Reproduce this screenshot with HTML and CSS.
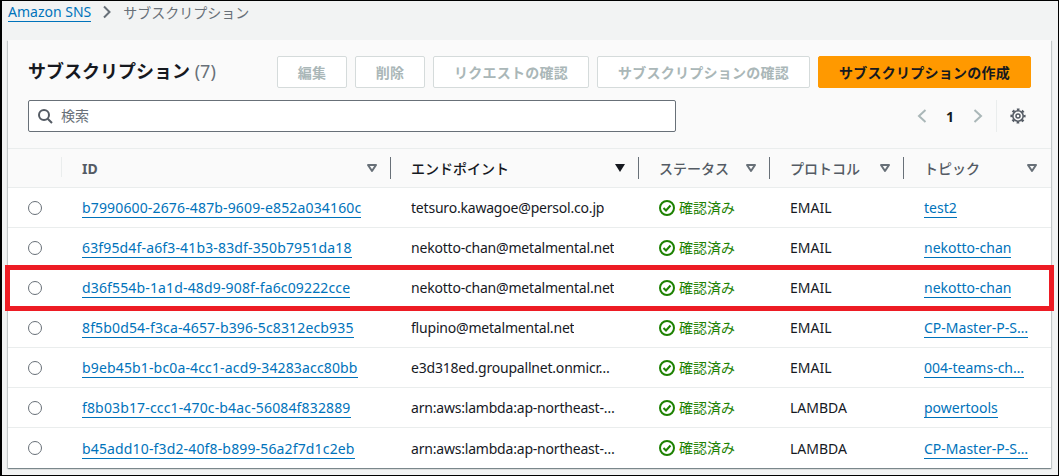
FILE: index.html
```html
<!DOCTYPE html>
<html lang="ja">
<head>
	<meta charset="UTF-8">
	<title>サブスクリプション</title>
	<link rel="stylesheet" href="styles.css">
</head>
<body>
	<div class="page">
		<div class="crumbs">
			<a class="link" href="#">Amazon SNS</a>
			<svg class="crumb-sep" width="12" height="14" viewBox="0 0 12 14"><path d="M3 1.5l5.5 5.5L3 12.5" fill="none" stroke="#687078" stroke-width="2"/></svg>
			<span class="crumb-now">サブスクリプション</span>
		</div>
		<div class="card">
			<div class="card-head">
				<div class="title-row">
					<h1 class="title">サブスクリプション <span class="count">(7)</span></h1>
					<div class="actions">
						<button class="btn w-edit">編集</button>
						<button class="btn w-edit">削除</button>
						<button class="btn w-req">リクエストの確認</button>
						<button class="btn w-sub">サブスクリプションの確認</button>
						<button class="btn w-sub primary">サブスクリプションの作成</button>
					</div>
				</div>
				<div class="tools-row">
					<div class="search">
						<svg width="16" height="16" viewBox="0 0 16 16"><circle cx="7" cy="7" r="5" fill="none" stroke="#545b64" stroke-width="2"/><path d="M10.7 10.7L15 15" stroke="#545b64" stroke-width="2" fill="none"/></svg>
						<span class="placeholder">検索</span>
					</div>
					<div class="pager">
						<svg width="12" height="14" viewBox="0 0 12 14"><path d="M9.5 1L3 7l6.5 6" fill="none" stroke="#aab7b8" stroke-width="2"/></svg>
						<span class="page-num">1</span>
						<svg width="12" height="14" viewBox="0 0 12 14"><path d="M2.5 1L9 7l-6.5 6" fill="none" stroke="#aab7b8" stroke-width="2"/></svg>
					</div>
					<div class="prefs">
						<svg width="16" height="16" viewBox="0 0 16 16" fill="none" stroke="#545b64"><circle cx="8" cy="8" r="5.2" stroke-width="1.6"/><circle cx="8" cy="8" r="6.6" stroke-width="2" stroke-dasharray="2.6 2.58" stroke-dashoffset="1.3"/><circle cx="8" cy="8" r="2" stroke-width="1.5"/></svg>
					</div>
				</div>
			</div>
			<div class="row head">
				<div class="cell th first"></div>
				<div class="cell th"><b class="th-id">ID</b><svg class="caret" width="12" height="10" viewBox="0 0 12 10"><path d="M2 2h8L6 8z" fill="none" stroke="#687078" stroke-width="2" stroke-linejoin="round"/></svg></div>
				<div class="cell th"><b class="sorted">エンドポイント</b><svg class="caret" width="12" height="10" viewBox="0 0 12 10"><path d="M1 1h10L6 9z" fill="#16191f"/></svg></div>
				<div class="cell th"><b>ステータス</b><svg class="caret" width="12" height="10" viewBox="0 0 12 10"><path d="M2 2h8L6 8z" fill="none" stroke="#687078" stroke-width="2" stroke-linejoin="round"/></svg></div>
				<div class="cell th"><b>プロトコル</b><svg class="caret" width="12" height="10" viewBox="0 0 12 10"><path d="M2 2h8L6 8z" fill="none" stroke="#687078" stroke-width="2" stroke-linejoin="round"/></svg></div>
				<div class="cell th"><b>トピック</b><svg class="caret" width="12" height="10" viewBox="0 0 12 10"><path d="M2 2h8L6 8z" fill="none" stroke="#687078" stroke-width="2" stroke-linejoin="round"/></svg></div>
			</div>
			<div class="row">
				<div class="cell radio-cell"><span class="radio"></span></div>
				<div class="cell"><a class="link id" href="#">b7990600-2676-487b-9609-e852a034160c</a></div>
				<div class="cell"><span class="clip ep">tetsuro.kawagoe@persol.co.jp</span></div>
				<div class="cell status"><svg class="ok" width="16" height="16" viewBox="0 0 16 16"><circle cx="8" cy="8" r="7" fill="none" stroke="#1d8102" stroke-width="2"/><path d="M4.5 8l2.5 2.5 4.5-5" fill="none" stroke="#1d8102" stroke-width="2"/></svg>確認済み</div>
				<div class="cell">EMAIL</div>
				<div class="cell"><a class="link" href="#">test2</a></div>
			</div>
			<div class="row">
				<div class="cell radio-cell"><span class="radio"></span></div>
				<div class="cell"><a class="link id" href="#">63f95d4f-a6f3-41b3-83df-350b7951da18</a></div>
				<div class="cell"><span class="clip ep">nekotto-chan@metalmental.net</span></div>
				<div class="cell status"><svg class="ok" width="16" height="16" viewBox="0 0 16 16"><circle cx="8" cy="8" r="7" fill="none" stroke="#1d8102" stroke-width="2"/><path d="M4.5 8l2.5 2.5 4.5-5" fill="none" stroke="#1d8102" stroke-width="2"/></svg>確認済み</div>
				<div class="cell">EMAIL</div>
				<div class="cell"><a class="link" href="#">nekotto-chan</a></div>
			</div>
			<div class="row">
				<div class="cell radio-cell"><span class="radio"></span></div>
				<div class="cell"><a class="link id" href="#">d36f554b-1a1d-48d9-908f-fa6c09222cce</a></div>
				<div class="cell"><span class="clip ep">nekotto-chan@metalmental.net</span></div>
				<div class="cell status"><svg class="ok" width="16" height="16" viewBox="0 0 16 16"><circle cx="8" cy="8" r="7" fill="none" stroke="#1d8102" stroke-width="2"/><path d="M4.5 8l2.5 2.5 4.5-5" fill="none" stroke="#1d8102" stroke-width="2"/></svg>確認済み</div>
				<div class="cell">EMAIL</div>
				<div class="cell"><a class="link" href="#">nekotto-chan</a></div>
			</div>
			<div class="row">
				<div class="cell radio-cell"><span class="radio"></span></div>
				<div class="cell"><a class="link id" href="#">8f5b0d54-f3ca-4657-b396-5c8312ecb935</a></div>
				<div class="cell"><span class="clip ep">flupino@metalmental.net</span></div>
				<div class="cell status"><svg class="ok" width="16" height="16" viewBox="0 0 16 16"><circle cx="8" cy="8" r="7" fill="none" stroke="#1d8102" stroke-width="2"/><path d="M4.5 8l2.5 2.5 4.5-5" fill="none" stroke="#1d8102" stroke-width="2"/></svg>確認済み</div>
				<div class="cell">EMAIL</div>
				<div class="cell"><a class="link clip" href="#">CP-Master-P-S…</a></div>
			</div>
			<div class="row">
				<div class="cell radio-cell"><span class="radio"></span></div>
				<div class="cell"><a class="link id" href="#">b9eb45b1-bc0a-4cc1-acd9-34283acc80bb</a></div>
				<div class="cell"><span class="clip ep">e3d318ed.groupallnet.onmicr…</span></div>
				<div class="cell status"><svg class="ok" width="16" height="16" viewBox="0 0 16 16"><circle cx="8" cy="8" r="7" fill="none" stroke="#1d8102" stroke-width="2"/><path d="M4.5 8l2.5 2.5 4.5-5" fill="none" stroke="#1d8102" stroke-width="2"/></svg>確認済み</div>
				<div class="cell">EMAIL</div>
				<div class="cell"><a class="link clip" href="#">004-teams-ch…</a></div>
			</div>
			<div class="row">
				<div class="cell radio-cell"><span class="radio"></span></div>
				<div class="cell"><a class="link id" href="#">f8b03b17-ccc1-470c-b4ac-56084f832889</a></div>
				<div class="cell"><span class="clip ep">arn:aws:lambda:ap-northeast-…</span></div>
				<div class="cell status"><svg class="ok" width="16" height="16" viewBox="0 0 16 16"><circle cx="8" cy="8" r="7" fill="none" stroke="#1d8102" stroke-width="2"/><path d="M4.5 8l2.5 2.5 4.5-5" fill="none" stroke="#1d8102" stroke-width="2"/></svg>確認済み</div>
				<div class="cell">LAMBDA</div>
				<div class="cell"><a class="link" href="#">powertools</a></div>
			</div>
			<div class="row last">
				<div class="cell radio-cell"><span class="radio"></span></div>
				<div class="cell"><a class="link id" href="#">b45add10-f3d2-40f8-b899-56a2f7d1c2eb</a></div>
				<div class="cell"><span class="clip ep">arn:aws:lambda:ap-northeast-…</span></div>
				<div class="cell status"><svg class="ok" width="16" height="16" viewBox="0 0 16 16"><circle cx="8" cy="8" r="7" fill="none" stroke="#1d8102" stroke-width="2"/><path d="M4.5 8l2.5 2.5 4.5-5" fill="none" stroke="#1d8102" stroke-width="2"/></svg>確認済み</div>
				<div class="cell">LAMBDA</div>
				<div class="cell"><a class="link clip" href="#">CP-Master-P-S…</a></div>
			</div>
		</div>
		<div class="marker"></div>
	</div>
</body>
</html>
```

FILE: styles.css
```css
* {
	box-sizing: border-box;
}
body {
	margin: 0;
	font-family: "Noto Sans", "Noto Sans CJK JP", sans-serif;
	font-size: 14px;
	color: #16191f;
}
.page {
	position: relative;
	width: 1059px;
	height: 476px;
	overflow: hidden;
	padding-left: 6px;
	background: #f2f3f3;
	border: 1px solid #000;
	border-width: 1px 1px 1px 2px;
}
.link {
	color: #0073bb;
	text-decoration: none;
	border-bottom: 1px solid #0073bb;
	line-height: 18px;
}
.cell .link {
	margin-top: 2px;
}
.id {
	letter-spacing: 0.15px;
}
.crumbs {
	display: flex;
	align-items: center;
	height: 24px;
	margin-top: -1px;
	margin-left: 0;
}
.crumb-sep {
	margin: 0 10px;
}
.crumb-now {
	color: #687078;
}
.card {
	width: 1043px;
	margin-top: 16px;
	background: #fafafa;
	box-shadow: 0 1px 1px 0 rgba(0, 28, 36, 0.3), 1px 1px 1px 0 rgba(0, 28, 36, 0.15), -1px 1px 1px 0 rgba(0, 28, 36, 0.15);
}
.card-head {
	padding: 16px 20px;
	border-bottom: 1px solid #eaeded;
}
.title-row {
	display: flex;
	justify-content: space-between;
	align-items: center;
}
.title {
	margin: 0 0 4px;
	font-size: 18px;
	font-weight: 700;
}
.count {
	font-weight: 400;
	color: #687078;
}
.actions {
	display: flex;
	gap: 8px;
}
.btn {
	height: 32px;
	padding: 0;
	font: 700 14px "Noto Sans", "Noto Sans CJK JP", sans-serif;
	letter-spacing: 0.25px;
	color: #aab7b8;
	background: #fff;
	border: 1px solid #d5dbdb;
	border-radius: 2px;
}
.w-edit {
	width: 70px;
}
.w-req {
	width: 156px;
}
.w-sub {
	width: 213px;
}
.btn.primary {
	color: #16191f;
	background: #ff9900;
	border-color: #ff9900;
}
.tools-row {
	display: flex;
	align-items: center;
	margin-top: 12px;
}
.search {
	display: flex;
	align-items: center;
	gap: 8px;
	width: 648px;
	height: 32px;
	padding-left: 8px;
	background: #fff;
	border: 1px solid #687078;
	border-radius: 2px;
}
.placeholder {
	padding-bottom: 2px;
	color: #687078;
}
.pager {
	display: flex;
	align-items: center;
	gap: 18px;
	margin-left: auto;
}
.page-num {
	width: 8px;
	font-weight: 700;
}
.prefs {
	display: flex;
	align-items: center;
	height: 32px;
	margin: 0 5px 0 12px;
	padding-left: 13px;
	border-left: 1px solid #eaeded;
}
.row {
	display: grid;
	grid-template-columns: 54px 329px 248px 131px 134px 147px;
	height: 40px;
	background: #fff;
	border-bottom: 1px solid #eaeded;
}
.row.last {
	border-bottom: 0;
}
.row.head {
	height: 39px;
	background: #fafafa;
}
.cell {
	display: flex;
	align-items: center;
	min-width: 0;
	padding: 0 20px;
	white-space: nowrap;
}
.clip {
	overflow: hidden;
	white-space: nowrap;
}
.ep {
	letter-spacing: -0.2px;
}
.th {
	position: relative;
	justify-content: space-between;
	color: #545b64;
	padding-right: 13px;
}
.th b {
	font-weight: 500;
}
.th .th-id {
	font-weight: 700;
}
.th::before {
	content: "";
	position: absolute;
	left: -1px;
	top: 8px;
	bottom: 8px;
	width: 1px;
	background: #687078;
}
.th.first::before,
.th:nth-child(2)::before {
	display: none;
}
.th.first {
	border-right: 1px solid #eaeded;
	height: 20px;
	margin-top: 8px;
}
.sorted {
	color: #16191f;
}
.radio-cell {
	padding: 0 0 0 20px;
}
.radio {
	width: 14px;
	height: 14px;
	border: 1.5px solid #687078;
	border-radius: 50%;
}
.status {
	padding-bottom: 2px;
	color: #1d8102;
}
.ok {
	margin: 2px 4px 0 0;
}
.marker {
	position: absolute;
	left: 3px;
	top: 264px;
	width: 1049px;
	height: 46px;
	border: 5px solid #ed1c24;
}
```
